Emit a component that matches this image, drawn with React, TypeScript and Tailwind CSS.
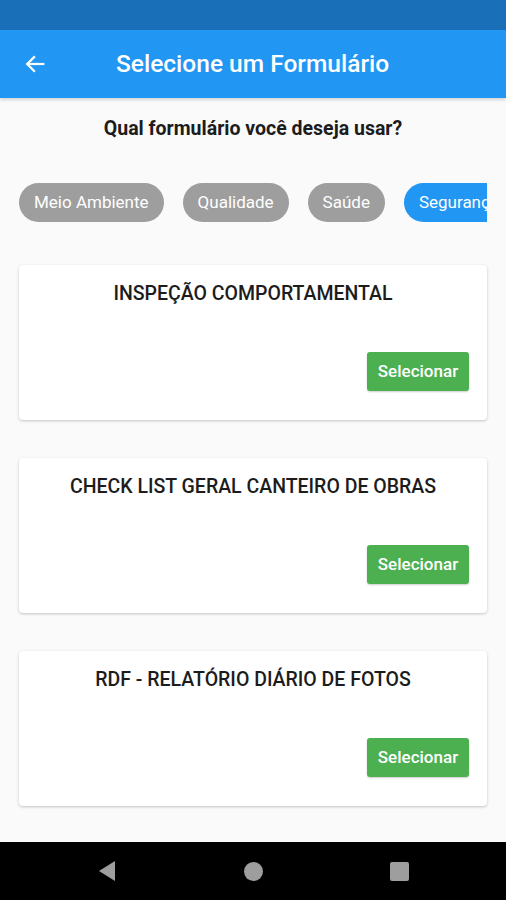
import React from "react";

const categories = [
  { label: "Meio Ambiente", active: false },
  { label: "Qualidade", active: false },
  { label: "Saúde", active: false },
  { label: "Segurança", active: true },
];

const forms = [
  "INSPEÇÃO COMPORTAMENTAL",
  "CHECK LIST GERAL CANTEIRO DE OBRAS",
  "RDF - RELATÓRIO DIÁRIO DE FOTOS",
];

const FormCard = ({ title }: { title: string }) => (
  <div className="bg-white rounded-[4px] shadow-[0_1px_3px_rgba(0,0,0,0.22)] h-[155px] flex flex-col pt-[17px] pb-[29px] pr-[18px]">
    <p className="text-center text-[19.5px] font-medium text-[#1c1c1c] leading-[24px] pl-[18px]">
      {title}
    </p>
    <div className="mt-auto flex justify-end">
      <button className="bg-[#4caf50] text-white font-medium text-[17px] h-[39px] w-[102px] rounded-[3px] shadow-[0_1px_2px_rgba(0,0,0,0.2)]">
        Selecionar
      </button>
    </div>
  </div>
);

export default function App() {
  return (
    <div className="w-[506px] h-[900px] flex flex-col bg-[#fafafa] font-['Roboto',sans-serif] overflow-hidden">
      <div className="h-[30px] bg-[#1a70b8]" />
      <header className="h-[68px] bg-[#2196f3] flex items-center shadow-[0_2px_3px_rgba(0,0,0,0.15)] z-10">
        <svg width="22" height="22" viewBox="0 0 24 24" className="ml-[24px]" fill="none" stroke="white" strokeWidth="2.4" strokeLinecap="square">
          <path d="M21 12H4" />
          <path d="M11 4.5L3.5 12l7.5 7.5" />
        </svg>
        <h1 className="ml-[70px] text-white text-[24.5px] font-medium">Selecione um Formulário</h1>
      </header>
      <main className="flex-1 flex flex-col">
        <p className="mt-[17px] text-center text-[19.5px] font-bold text-[#1c1c1c] leading-[28px]">
          Qual formulário você deseja usar?
        </p>
        <div className="mt-[40px] mx-[19px] overflow-hidden flex gap-[19px] whitespace-nowrap">
          {categories.map((c) => (
            <span
              key={c.label}
              className={`shrink-0 h-[39px] px-[15px] rounded-full flex items-center text-[17px] text-white ${
                c.active ? "bg-[#2196f3]" : "bg-[#9e9e9e]"
              }`}
            >
              {c.label}
            </span>
          ))}
        </div>
        <div className="mt-[43px] mx-[19px] flex flex-col gap-[38px]">
          {forms.map((f) => (
            <FormCard key={f} title={f} />
          ))}
        </div>
      </main>
      <nav className="h-[58px] bg-black flex items-center justify-center gap-[127px]">
        <svg width="20" height="22" viewBox="0 0 20 22">
          <path d="M18 1L2 11l16 10z" fill="#9e9e9e" />
        </svg>
        <span className="w-[19px] h-[19px] rounded-full bg-[#9e9e9e]" />
        <span className="w-[19px] h-[19px] rounded-[2px] bg-[#9e9e9e]" />
      </nav>
    </div>
  );
}
